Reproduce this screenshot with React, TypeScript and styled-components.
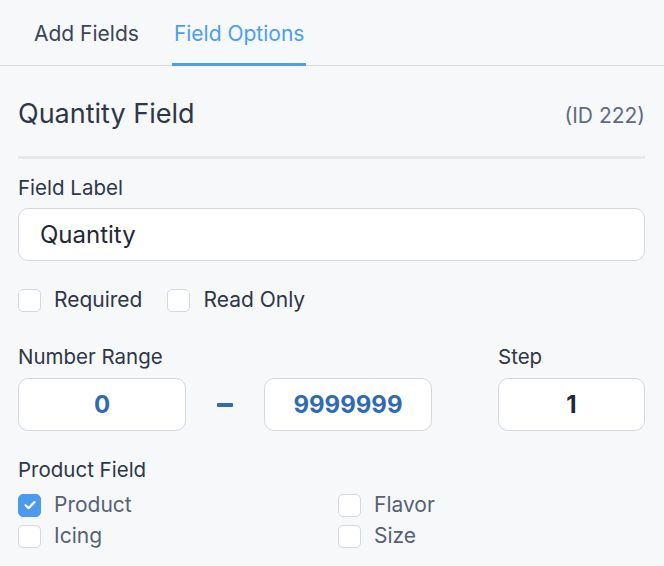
import React from 'react';
import styled, { createGlobalStyle } from 'styled-components';

const GlobalStyle = createGlobalStyle`
  html, body {
    margin: 0;
    padding: 0;
    background: #f7f8f9;
  }

  body {
    font-family: Inter, "Noto Sans", sans-serif;
    color: #2d3748;
  }
`;

const Panel = styled.div`
  width: 664px;
  min-height: 566px;
  background: #f7f8f9;
`;

const TabBar = styled.div`
  display: flex;
  gap: 31px;
  padding-left: 32px;
  border-bottom: 1px solid #d5d9e1;
`;

const Tab = styled.div<{ $active?: boolean }>`
  height: 60px;
  padding: 3px 2px 0;
  display: flex;
  align-items: center;
  font-size: 21px;
  color: ${(p) => (p.$active ? '#4b9ef2' : '#3a4558')};
  border-bottom: 3px solid ${(p) => (p.$active ? '#4b9ef2' : 'transparent')};
  margin-bottom: -1px;
`;

const Content = styled.div`
  padding: 0 19px 0 18px;
`;

const Header = styled.div`
  display: flex;
  justify-content: space-between;
  align-items: baseline;
  padding-top: 32px;
  padding-bottom: 26px;
  border-bottom: 3px solid #e6e8eb;
`;

const Title = styled.h1`
  margin: 0;
  font-size: 27px;
  line-height: 32px;
  font-weight: 400;
  color: #2d3748;
`;

const IdTag = styled.span`
  font-size: 21px;
  color: #5f6b7e;
`;

const Label = styled.div<{ $top: number }>`
  margin-top: ${(p) => p.$top}px;
  font-size: 20.5px;
  line-height: 24px;
  color: #2d3748;
`;

const TextInput = styled.div`
  margin-top: 8px;
  height: 53px;
  box-sizing: border-box;
  display: flex;
  align-items: center;
  padding: 0 21px;
  background: #ffffff;
  border: 1px solid #d4d8df;
  border-radius: 10px;
  font-size: 24px;
  color: #1f2836;
`;

const CheckRow = styled.div`
  display: flex;
  gap: 25px;
  margin-top: 27px;
`;

const CheckItem = styled.label<{ $muted?: boolean }>`
  display: flex;
  align-items: center;
  gap: 13px;
  font-size: 21px;
  line-height: 24px;
  color: ${(p) => (p.$muted ? '#556175' : '#2d3748')};
`;

const Box = styled.span<{ $checked?: boolean }>`
  width: 23px;
  height: 23px;
  box-sizing: border-box;
  border-radius: 5px;
  display: flex;
  align-items: center;
  justify-content: center;
  background: ${(p) => (p.$checked ? '#4a9af0' : '#ffffff')};
  border: 1px solid ${(p) => (p.$checked ? '#4a9af0' : '#d4d8df')};
`;

const RangeRow = styled.div`
  display: flex;
  align-items: flex-end;
  margin-top: 33px;
`;

const RangeGroup = styled.div`
  display: flex;
  flex-direction: column;
`;

const RangeInputs = styled.div`
  display: flex;
  align-items: center;
  margin-top: 9px;
`;

const StepGroup = styled.div`
  display: flex;
  flex-direction: column;
  margin-left: auto;
`;

const NumberBox = styled.div<{ $width: number; $blue?: boolean }>`
  width: ${(p) => p.$width}px;
  height: 53px;
  box-sizing: border-box;
  display: flex;
  align-items: center;
  justify-content: center;
  background: #ffffff;
  border: 1px solid #d4d8df;
  border-radius: 10px;
  font-size: 24px;
  font-weight: 700;
  color: ${(p) => (p.$blue ? '#2e6bb3' : '#1f2836')};
`;

const Dash = styled.div`
  width: 78px;
  display: flex;
  justify-content: center;

  &::after {
    content: '';
    width: 16px;
    height: 4px;
    border-radius: 1px;
    background: #2e6bb3;
  }
`;

const ProductGrid = styled.div`
  display: grid;
  grid-template-columns: 320px 1fr;
  row-gap: 7px;
  margin-top: 11px;
`;

const Check = ({ checked, muted, children }: { checked?: boolean; muted?: boolean; children: React.ReactNode }) => (
  <CheckItem $muted={muted}>
    <Box $checked={checked}>
      {checked && (
        <svg width="14" height="14" viewBox="0 0 14 14" fill="none">
          <path d="M2.5 7.2l3 2.9 6-6" stroke="#ffffff" strokeWidth="2.2" strokeLinecap="round" strokeLinejoin="round" />
        </svg>
      )}
    </Box>
    {children}
  </CheckItem>
);

const App: React.FC = () => {
  return (
    <Panel>
      <GlobalStyle />
      <TabBar>
        <Tab>Add Fields</Tab>
        <Tab $active>Field Options</Tab>
      </TabBar>
      <Content>
        <Header>
          <Title>Quantity Field</Title>
          <IdTag>(ID 222)</IdTag>
        </Header>

        <Label $top={17}>Field Label</Label>
        <TextInput>Quantity</TextInput>

        <CheckRow>
          <Check>Required</Check>
          <Check>Read Only</Check>
        </CheckRow>

        <RangeRow>
          <RangeGroup>
            <Label $top={0}>Number Range</Label>
            <RangeInputs>
              <NumberBox $width={168} $blue>0</NumberBox>
              <Dash />
              <NumberBox $width={168} $blue>9999999</NumberBox>
            </RangeInputs>
          </RangeGroup>
          <StepGroup>
            <Label $top={0}>Step</Label>
            <RangeInputs>
              <NumberBox $width={147}>1</NumberBox>
            </RangeInputs>
          </StepGroup>
        </RangeRow>

        <Label $top={27}>Product Field</Label>
        <ProductGrid>
          <Check checked muted>Product</Check>
          <Check muted>Flavor</Check>
          <Check muted>Icing</Check>
          <Check muted>Size</Check>
        </ProductGrid>
      </Content>
    </Panel>
  );
};

export default App;
